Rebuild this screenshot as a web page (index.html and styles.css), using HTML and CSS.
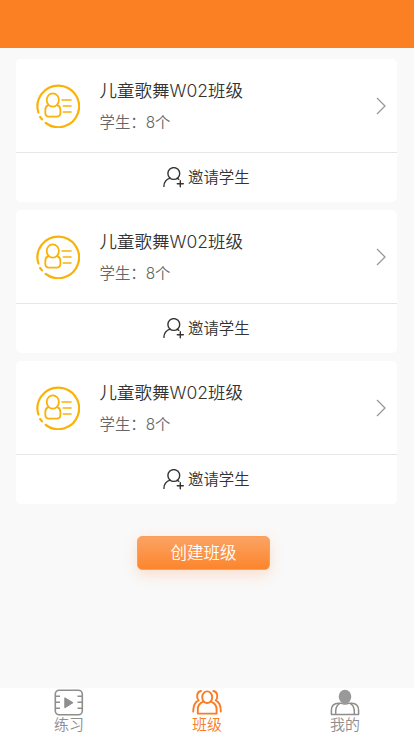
FILE: index.html
```html
<!DOCTYPE html>
<html lang="zh-CN">
<head>
<meta charset="utf-8">
<title>班级</title>
<link rel="stylesheet" href="styles.css">
</head>
<body>
<svg class="defs" width="0" height="0" aria-hidden="true">
  <symbol id="badge" viewBox="0 0 44 44">
    <g fill="none" stroke="#f9b208" stroke-linecap="round" stroke-linejoin="round">
      <path stroke-width="2.2" d="M2.4 28.5A20.8 20.8 0 1 1 9.8 39M4.1 33L6 35.4"/>
      <path stroke-width="1.8" d="M12.4 21.2C10.2 22 9.3 23.6 9.3 26V28.8C9.3 31.5 10.6 32.6 13 32.6H20.6C23.2 32.6 24.4 31.5 24.4 28.8V26C24.4 23.6 23.4 22 21.2 21.2"/>
      <ellipse stroke-width="1.8" cx="16.8" cy="16" rx="6.1" ry="6.7"/>
      <path stroke-width="1.6" d="M26 16H35M27.3 22H35M27.3 28H35"/>
    </g>
  </symbol>
  <symbol id="invite" viewBox="0 0 21 21">
    <g fill="none" stroke="#333" stroke-width="1.4" stroke-linecap="round">
      <circle cx="10.8" cy="6.5" r="5.9"/>
      <path d="M7.2 11.2C3.3 12.3 1 15.2 .9 19.4M14.2 11.2L15.8 12.3M17.3 13.7V19.7M14.3 16.7H20.3"/>
    </g>
  </symbol>
  <symbol id="chevron" viewBox="0 0 10 18">
    <path fill="none" stroke="#999" stroke-width="1.3" d="M1 1L9 9L1 17"/>
  </symbol>
</svg>
<header class="header"></header>
<main class="list">
  <section class="card">
    <div class="info">
      <svg class="badge"><use href="#badge"/></svg>
      <div class="text"><h2>儿童歌舞W02班级</h2><p>学生：8个</p></div>
      <svg class="chevron"><use href="#chevron"/></svg>
    </div>
    <div class="invite"><svg><use href="#invite"/></svg><span>邀请学生</span></div>
  </section>
  <section class="card">
    <div class="info">
      <svg class="badge"><use href="#badge"/></svg>
      <div class="text"><h2>儿童歌舞W02班级</h2><p>学生：8个</p></div>
      <svg class="chevron"><use href="#chevron"/></svg>
    </div>
    <div class="invite"><svg><use href="#invite"/></svg><span>邀请学生</span></div>
  </section>
  <section class="card">
    <div class="info">
      <svg class="badge"><use href="#badge"/></svg>
      <div class="text"><h2>儿童歌舞W02班级</h2><p>学生：8个</p></div>
      <svg class="chevron"><use href="#chevron"/></svg>
    </div>
    <div class="invite"><svg><use href="#invite"/></svg><span>邀请学生</span></div>
  </section>
  <button class="create">创建班级</button>
</main>
<nav class="tabs">
  <a class="tab">
    <svg viewBox="0 0 30 27" fill="none" stroke="#8e8e8e" stroke-width="1.6">
      <rect x="1.3" y="1.2" width="27" height="24.6" rx="4"/>
      <path d="M1.5 7.3H6M1.5 13.3H6M1.5 19.3H6M28 7.3H23.5M28 13.3H23.5M28 19.3H23.5"/>
      <path fill="#8e8e8e" stroke-linejoin="round" stroke-width="1" d="M10.8 8.8L19 13.7L10.8 18.8Z"/>
    </svg>
    <span>练习</span>
  </a>
  <a class="tab active">
    <svg viewBox="0 0 30 27" fill="none" stroke="#fb7c22" stroke-width="1.9" stroke-linecap="round" stroke-linejoin="round">
      <ellipse cx="15.2" cy="8.2" rx="5" ry="5.8"/>
      <path d="M11.3 12.6C7.6 14 5.8 16.6 5.8 20.5V24.6H24.6V20.5C24.6 16.6 22.8 14 19.1 12.6"/>
      <path d="M9 2C4.8 2.5 4 8.2 6.6 11.4C2.8 13.2 1.2 17 1.2 22.6M21.4 2C25.6 2.5 26.4 8.2 23.8 11.4C27.6 13.2 28.8 17 28.8 22.6"/>
    </svg>
    <span>班级</span>
  </a>
  <a class="tab">
    <svg viewBox="0 0 30 27" fill="none" stroke="#8e8e8e" stroke-width="1.5" stroke-linejoin="round">
      <ellipse cx="15" cy="7.7" rx="6.3" ry="7" fill="#999" stroke="none"/>
      <path d="M10.3 14.2H8.5C3.4 14.2 1.4 17 1.4 21.5V25.4H28.6V21.5C28.6 17 26.6 14.2 21.5 14.2H19.7"/>
      <path d="M10.8 14.1C7 15.5 5.7 18 5.7 22V25.4M19.2 14.1C23 15.5 24.3 18 24.3 22V25.4M10.8 14.1Q15 16 19.2 14.1"/>
    </svg>
    <span>我的</span>
  </a>
</nav>
</body>
</html>
```
FILE: styles.css
```css
* { box-sizing: border-box; }

body {
  margin: 0;
  height: 736px;
  display: flex;
  flex-direction: column;
  overflow: hidden;
  background: #f9f9f9;
  color: #333;
  font-family: Inter, "Noto Sans CJK SC", sans-serif;
  font-weight: 350;
}

svg { display: block; flex: none; }
.defs { position: absolute; }

.header {
  height: 48px;
  flex: none;
  background: #fb8024;
}

.list {
  flex: 1;
  display: flex;
  flex-direction: column;
  gap: 8px;
  padding: 11px 17px 0 16px;
}

.card {
  height: 143px;
  flex: none;
  background: #fff;
  border-radius: 5px;
}

.info {
  height: 94px;
  display: flex;
  align-items: center;
  padding: 0 11px 0 20px;
  border-bottom: 1px solid #e6e6e6;
}

.badge { width: 44px; height: 44px; }
.text { flex: 1; margin-left: 19.5px; padding-top: 2px; }

h2 {
  margin: 0;
  font-size: 17.5px;
  font-weight: 350;
  line-height: 26px;
}

p {
  margin: 6px 0 0;
  font-size: 15.4px;
  line-height: 26px;
  color: #666;
}

.chevron { width: 10px; height: 18px; }

.invite {
  height: 49px;
  display: flex;
  align-items: center;
  padding-left: 147px;
  gap: 4px;
  font-size: 15.4px;
  line-height: 24px;
}

.invite svg { width: 21px; height: 21px; }

.create {
  width: 133px;
  height: 34px;
  margin: 24px 0 0 121px;
  padding: 0;
  border: 1px solid #fba05c;
  border-radius: 5px;
  background: linear-gradient(#fba364, #fd852c);
  box-shadow: 0 5px 14px rgba(253, 133, 44, .22);
  color: #fff;
  font: inherit;
  font-size: 16.5px;
  line-height: 32px;
}

.tabs {
  height: 48px;
  flex: none;
  display: flex;
  background: #fff;
}

.tab {
  flex: 1;
  display: flex;
  flex-direction: column;
  align-items: center;
  padding-top: 1px;
  font-size: 15px;
  line-height: 18px;
  color: #8e8e8e;
}

.tab svg { width: 30px; height: 27px; }
.active { color: #fb7c22; }
```
